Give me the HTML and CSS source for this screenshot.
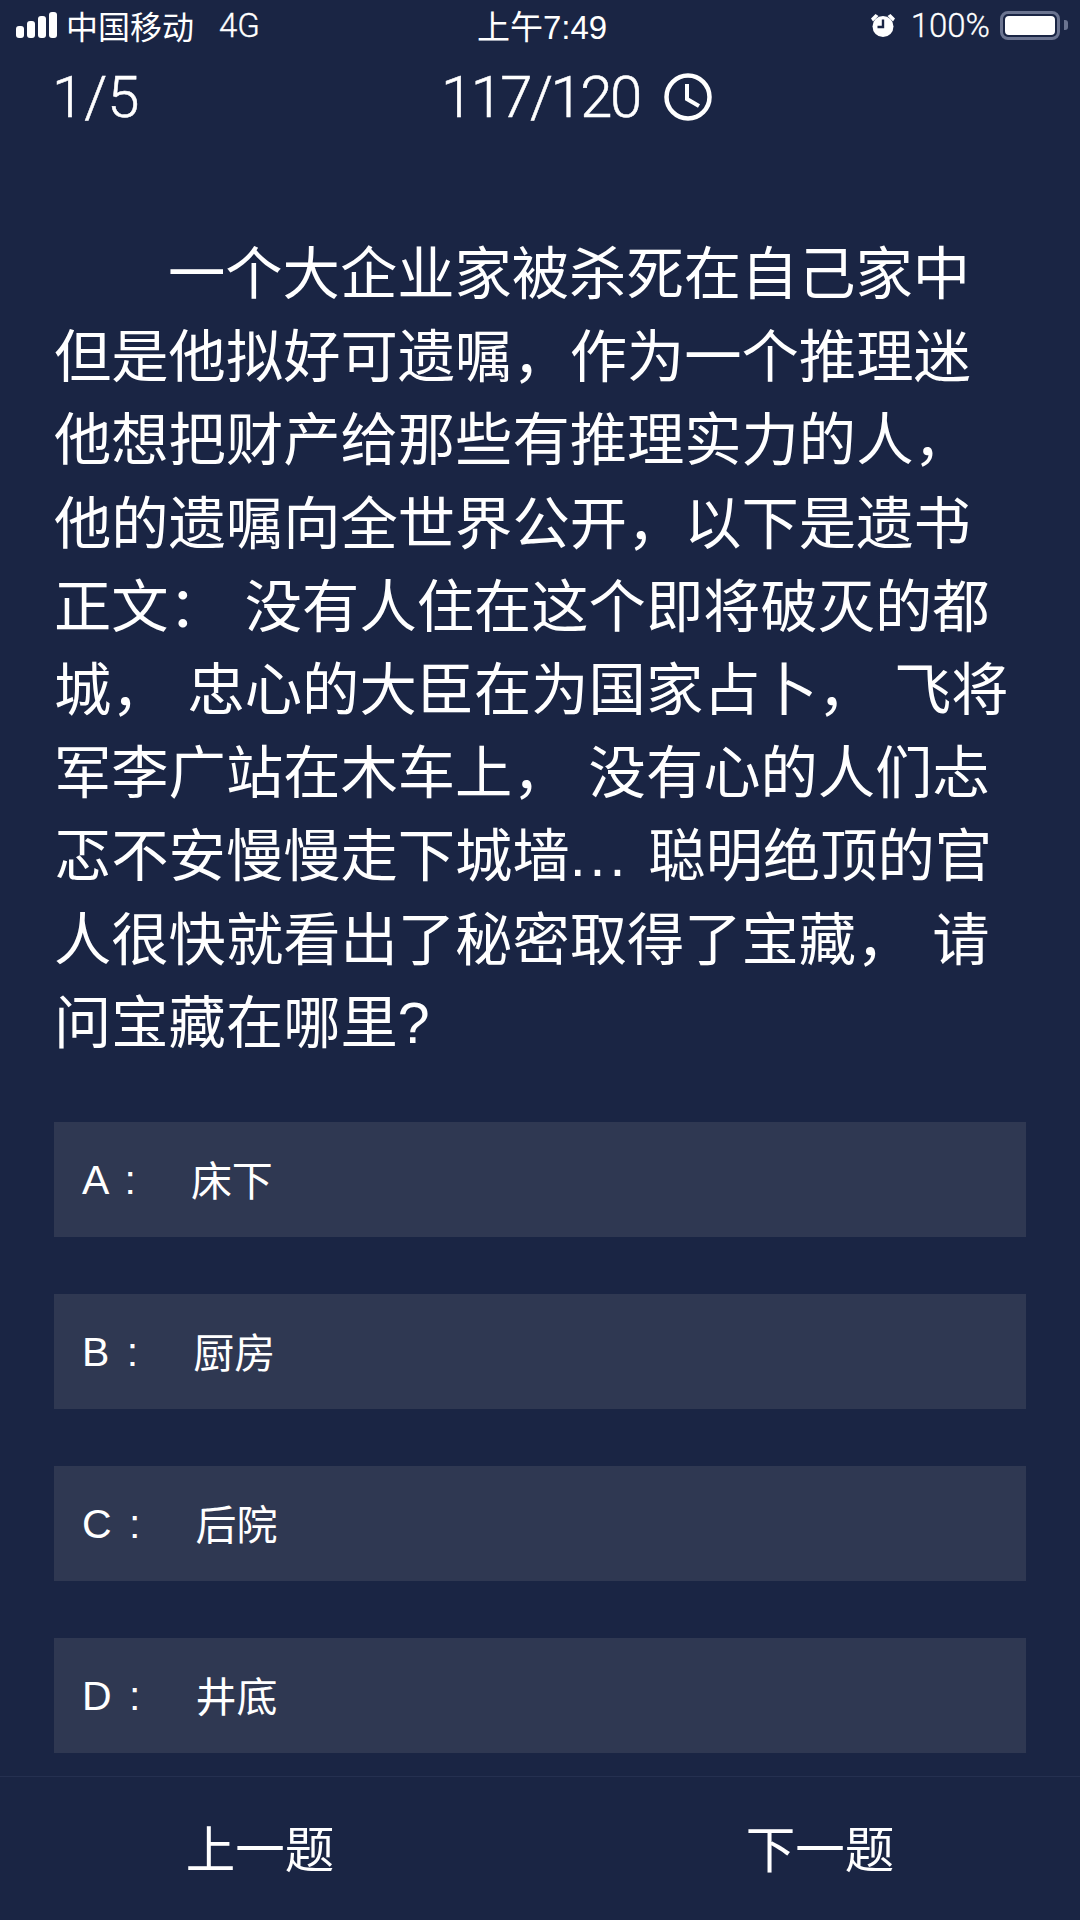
FILE: index.html
```html
<!DOCTYPE html>
<html lang="zh-CN">
<head>
<meta charset="utf-8">
<title>推理题</title>
<link rel="stylesheet" href="styles.css">
</head>
<body>
<div class="app">
  <header class="status">
    <div class="status-left">
      <svg class="signal" viewBox="0 0 42 26" width="42" height="26"><rect x="0" y="14" width="8" height="12" rx="3"/><rect x="11" y="9" width="8" height="17" rx="3"/><rect x="22" y="4" width="8" height="22" rx="3"/><rect x="33" y="0" width="8" height="26" rx="3"/></svg>
      <span class="carrier">中国移动</span>
      <span class="net">4G</span>
    </div>
    <div class="status-time">上午7:49</div>
    <div class="status-right">
      <svg class="alarm" viewBox="0 0 26 26" width="26" height="26"><circle cx="13" cy="14.500" r="10.500" fill="#fff"/><path d="M1 6.500 5.500 2l3 2-5.500 5.500zM25 6.500 20.500 2l-3 2 5.500 5.500z" fill="#fff"/><path d="M13 7.500v7.500H7.500" fill="none" stroke="#1a2544" stroke-width="2.400"/></svg>
      <span class="pct">100%</span>
      <div class="battery"><div class="battery-fill"></div></div>
      <div class="battery-nub"></div>
    </div>
  </header>
  <section class="progress">
    <span class="index">1/5</span>
    <div class="timer">
      <span class="count">117/120</span>
      <svg class="clock" viewBox="0 0 48 48" width="48" height="48"><circle cx="24" cy="24" r="21.500" fill="none" stroke="#fff" stroke-width="4.500"/><path d="M23 11v15l12 7" fill="none" stroke="#fff" stroke-width="4"/></svg>
    </div>
  </section>
  <p class="question"><span class="indent">一个大企业家被杀死在自己家中</span><br>但是他拟好可遗嘱，作为一个推理迷<br>他想把财产给那些有推理实力的人，<br>他的遗嘱向全世界公开，以下是遗书<br>正文： 没有人住在这个即将破灭的都<br>城， 忠心的大臣在为国家占卜， 飞将<br>军李广站在木车上， 没有心的人们忐<br>忑不安慢慢走下城墙<span class="dots">...</span> 聪明绝顶的官<br>人很快就看出了秘密取得了宝藏， 请<br>问宝藏在哪里?</p>
  <ul class="options">
    <li class="option"><span class="key">A :</span><span class="answer">床下</span></li>
    <li class="option"><span class="key">B :</span><span class="answer">厨房</span></li>
    <li class="option"><span class="key">C :</span><span class="answer">后院</span></li>
    <li class="option"><span class="key">D :</span><span class="answer">井底</span></li>
  </ul>
  <nav class="footer">
    <button class="nav-btn">上一题</button>
    <button class="nav-btn">下一题</button>
  </nav>
</div>
</body>
</html>
```
FILE: styles.css
```css
* { box-sizing: border-box; margin: 0; padding: 0; }
html, body { width: 1080px; height: 1920px; overflow: hidden; }
body { background: #1a2544; color: #fff; font-family: "Liberation Sans", "Noto Sans CJK SC", sans-serif; }
.app { width: 1080px; height: 1920px; display: flex; flex-direction: column; }
.status { height: 50px; padding: 0 12px 0 16px; display: grid; grid-template-columns: 1fr auto 1fr; align-items: center; font-size: 32px; }
.status-left { display: flex; align-items: center; }
.signal { fill: #fff; margin-right: 8px; }
.net { margin-left: 25px; font-size: 33px; font-family: Roboto, sans-serif; font-weight: 300; -webkit-text-stroke: 0.300px #fff; }
.status-time { font-size: 33px; }
.status-right { display: flex; align-items: center; justify-content: flex-end; }
.pct { margin-left: 15px; font-family: Roboto, sans-serif; font-weight: 300; font-size: 33px; -webkit-text-stroke: 0.300px #fff; }
.battery { margin-left: 10px; width: 60px; height: 29px; border: 3px solid #6b7490; border-radius: 8px; padding: 2px; }
.battery-fill { width: 100%; height: 100%; background: #fff; border-radius: 4px; }
.battery-nub { width: 4px; height: 10px; background: #6b7490; margin-left: 4px; border-radius: 0 3px 3px 0; }
.progress { height: 94px; padding-left: 52px; display: flex; align-items: center; font-family: Roboto, sans-serif; font-weight: 300; font-size: 58px; -webkit-text-stroke: 0.500px #fff; }
.index { width: 389px; }
.timer { display: flex; align-items: center; gap: 24px; }
.count { letter-spacing: -2.500px; }
.question { margin-top: 89px; padding-left: 54px; font-size: 57.300px; line-height: 83.200px; font-family: "Liberation Sans", "Noto Sans CJK SC", sans-serif; word-spacing: 3px; white-space: pre; }
.indent { margin-left: 114px; }
.dots { letter-spacing: 4px; }
.options { list-style: none; margin-top: 57px; padding: 0 54px; display: flex; flex-direction: column; gap: 57px; }
.option { height: 115px; background: #2f3852; display: flex; align-items: center; padding-left: 28px; font-size: 41px; }
.key { margin: 2px 55px 0 0; word-spacing: 6px; }
.answer { margin-bottom: 4px; }
.footer { position: fixed; left: 0; right: 0; bottom: 0; height: 144px; border-top: 1px solid #253050; padding-bottom: 4px; display: flex; justify-content: space-between; }
.nav-btn { width: 520px; background: none; border: 0; color: #fff; font-size: 49.500px; font-family: "Noto Sans CJK SC", sans-serif; }
```
